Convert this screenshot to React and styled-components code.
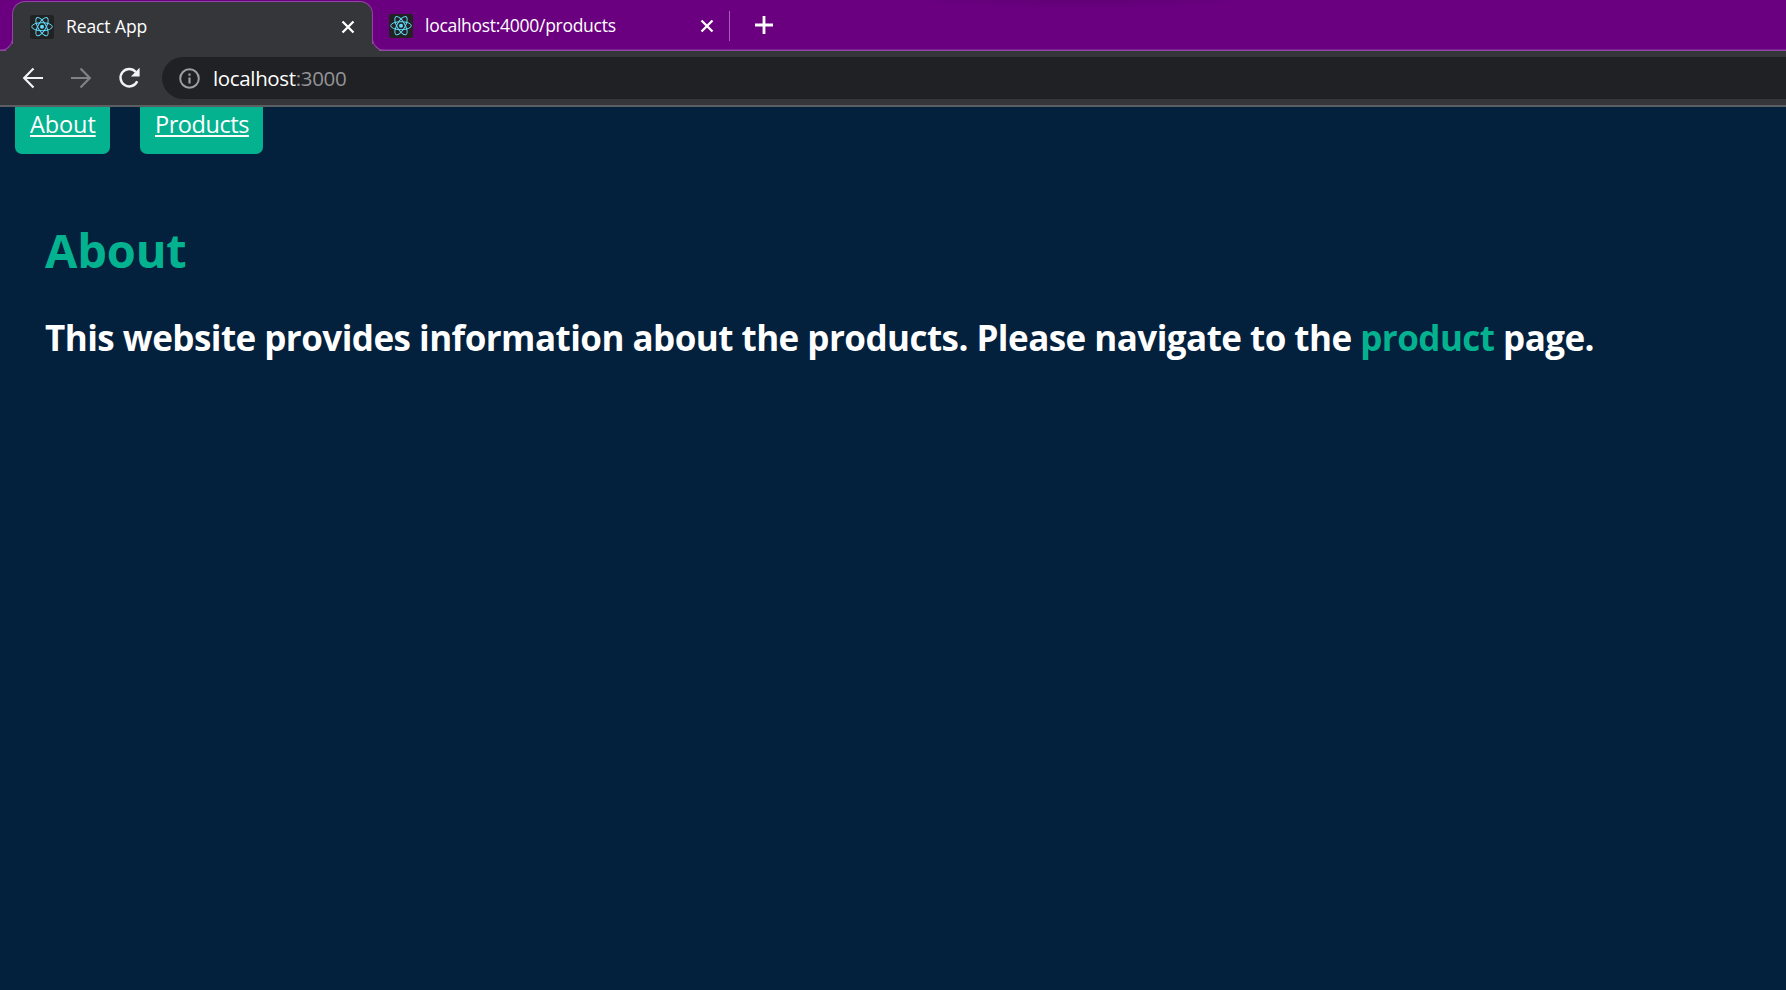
import React from "react";
import styled, { createGlobalStyle, css } from "styled-components";

const GlobalStyle = createGlobalStyle`
  *, *::before, *::after { box-sizing: border-box; }
  html, body { margin: 0; height: 100%; overflow: hidden; }
  body { font-family: "Open Sans", "Noto Sans", sans-serif; background: #03203c; }
  h1, h2 { margin: 0; }
`;

const Window = styled.div`
  display: flex;
  flex-direction: column;
  width: 100%;
  height: 990px;
`;

const TabStrip = styled.div`
  display: flex;
  height: 51px;
  padding: 1px 0 0 12px;
  background: radial-gradient(ellipse 180px 9px at 1082px 0, #610076, #6a0080);
  box-shadow: inset 0 -1px #9145a4, inset 0 -2px #7a2390;
`;

const foot = css`
  content: "";
  position: absolute;
  bottom: 0;
  width: 13px;
  height: 13px;
  background: transparent;
`;

const Tab = styled.div`
  position: relative;
  display: flex;
  align-items: center;
  width: ${(p) => (p.$active ? 361 : 356)}px;
  height: 50px;
  padding: 0 15px 0 16px;
  color: #fff;
  font-size: 17.5px;

  ${(p) =>
    p.$active &&
    css`
      background: #35363a;
      border: 1.5px solid #9145a4;
      border-bottom: 0;
      border-radius: 13px 13px 0 0;
      padding-left: 17px;
      padding-right: 17px;

      &::before {
        ${foot}
        left: -13px;
        border-right: 1px solid #9145a4;
        border-bottom: 1px solid #9145a4;
        border-bottom-right-radius: 13px;
        box-shadow: 6px 6px 0 0 #35363a;
        clip-path: inset(0);
      }
      &::after {
        ${foot}
        right: -13px;
        border-left: 1px solid #9145a4;
        border-bottom: 1px solid #9145a4;
        border-bottom-left-radius: 13px;
        box-shadow: -6px 6px 0 0 #35363a;
        clip-path: inset(0);
      }
    `}
`;

const Favicon = styled.svg`
  width: 24px;
  height: 24px;
  margin-right: 12px;
  flex: none;
`;

const TabTitle = styled.span`
  flex: 1;
  padding-bottom: 2px;
  white-space: nowrap;
  letter-spacing: ${(p) => p.$spacing}px;
`;

const CloseIcon = styled.svg`
  width: 14px;
  height: 14px;
  flex: none;
`;

const TabDivider = styled.div`
  width: 1px;
  height: 30px;
  margin-top: 10px;
  background: #a55fb5;
`;

const NewTabIcon = styled.svg`
  width: 18px;
  height: 18px;
  margin: 15px 0 0 25px;
`;

const Toolbar = styled.div`
  display: flex;
  align-items: center;
  height: 56px;
  padding-left: 22px;
  background: #35363a;
  border-bottom: 2px solid #5d5e61;
`;

const ToolIcon = styled.svg`
  width: 22px;
  height: 22px;
  margin-right: 26px;
  flex: none;
  color: ${(p) => (p.$muted ? "#818286" : "#f1f3f4")};
`;

const AddressBar = styled.div`
  display: flex;
  align-items: center;
  flex: 1;
  height: 42px;
  margin-left: -4px;
  padding-left: 17px;
  background: #202124;
  border-radius: 21px 0 0 21px;
  color: #929497;
  font-size: 20.5px;
  letter-spacing: -0.35px;
`;

const InfoIcon = styled.svg`
  width: 21px;
  height: 21px;
  margin-right: 13px;
`;

const Host = styled.span`
  color: #fff;
`;

const Page = styled.main`
  flex: 1;
  background: #03203c;
`;

const Nav = styled.nav`
  display: flex;
  gap: 30px;
  padding-left: 15px;
`;

const NavLink = styled.a`
  width: ${(p) => p.$width}px;
  height: 47px;
  padding-left: 15px;
  background: #04b290;
  border-radius: 0 0 7px 7px;
  color: #fff;
  font-size: 23.5px;
  line-height: 34px;
  letter-spacing: ${(p) => p.$spacing}px;
  text-decoration: underline;
  text-decoration-thickness: 2px;
  text-underline-offset: 2px;
`;

const Content = styled.section`
  padding: 64px 45px 0;
  font-weight: 700;
  white-space: nowrap;
`;

const Title = styled.h1`
  color: #04b290;
  font-size: 47px;
  line-height: 64px;
  letter-spacing: -0.2px;
`;

const Description = styled.h2`
  margin-top: 32px;
  color: #fff;
  font-size: 35px;
  line-height: 48px;
  letter-spacing: -0.54px;
`;

const Highlight = styled.span`
  color: #04b290;
`;

function ReactFavicon() {
  return (
    <Favicon viewBox="0 0 24 24">
      <rect width="24" height="24" rx="2.5" fill="#222" />
      <g fill="none" stroke="#61dafb" strokeWidth="1">
        <ellipse cx="12" cy="11.7" rx="10.3" ry="4" />
        <ellipse cx="12" cy="11.7" rx="10.3" ry="4" transform="rotate(60 12 11.7)" />
        <ellipse cx="12" cy="11.7" rx="10.3" ry="4" transform="rotate(120 12 11.7)" />
      </g>
      <circle cx="12" cy="11.7" r="2" fill="#61dafb" />
    </Favicon>
  );
}

function Close() {
  return (
    <CloseIcon viewBox="0 0 14 14">
      <path d="M1.5 1.5l11 11M12.5 1.5l-11 11" stroke="#fff" strokeWidth="2.3" />
    </CloseIcon>
  );
}

export default function App() {
  return (
    <Window>
      <GlobalStyle />
      <TabStrip>
        <Tab $active>
          <ReactFavicon />
          <TabTitle $spacing={-0.1}>React App</TabTitle>
          <Close />
        </Tab>
        <Tab>
          <ReactFavicon />
          <TabTitle $spacing={-0.28}>localhost:4000/products</TabTitle>
          <Close />
        </Tab>
        <TabDivider />
        <NewTabIcon viewBox="0 0 18 18">
          <path d="M9 0v18M0 9h18" stroke="#fff" strokeWidth="2.8" />
        </NewTabIcon>
      </TabStrip>
      <Toolbar>
        <ToolIcon viewBox="0 0 22 22">
          <path d="M21 11H2.5M11.5 1.6L2.2 11l9.3 9.4" fill="none" stroke="currentColor" strokeWidth="2.2" />
        </ToolIcon>
        <ToolIcon viewBox="0 0 22 22" $muted>
          <path d="M1 11h18.5M10.5 1.6L19.8 11l-9.3 9.4" fill="none" stroke="currentColor" strokeWidth="2.2" />
        </ToolIcon>
        <ToolIcon viewBox="-0.6 0 22 22">
          <path d="M18.6 14.2A8.7 8.7 0 1 1 17.2 5" fill="none" stroke="currentColor" strokeWidth="2.4" />
          <path d="M21 0.8v8.7h-8.7z" fill="currentColor" />
        </ToolIcon>
        <AddressBar>
          <InfoIcon viewBox="0 0 21 21">
            <circle cx="10.5" cy="10.5" r="9.3" fill="none" stroke="#9aa0a6" strokeWidth="2" />
            <path d="M10.5 9.5v6M10.5 5.5v2.2" stroke="#9aa0a6" strokeWidth="2.2" />
          </InfoIcon>
          <Host>localhost</Host>:3000
        </AddressBar>
      </Toolbar>
      <Page>
        <Nav>
          <NavLink $width={95} $spacing={-0.1}>About</NavLink>
          <NavLink $width={123} $spacing={-0.45}>Products</NavLink>
        </Nav>
        <Content>
          <Title>About</Title>
          <Description>
            This website provides information about the products. Please navigate to the{" "}
            <Highlight>product</Highlight> page.
          </Description>
        </Content>
      </Page>
    </Window>
  );
}
